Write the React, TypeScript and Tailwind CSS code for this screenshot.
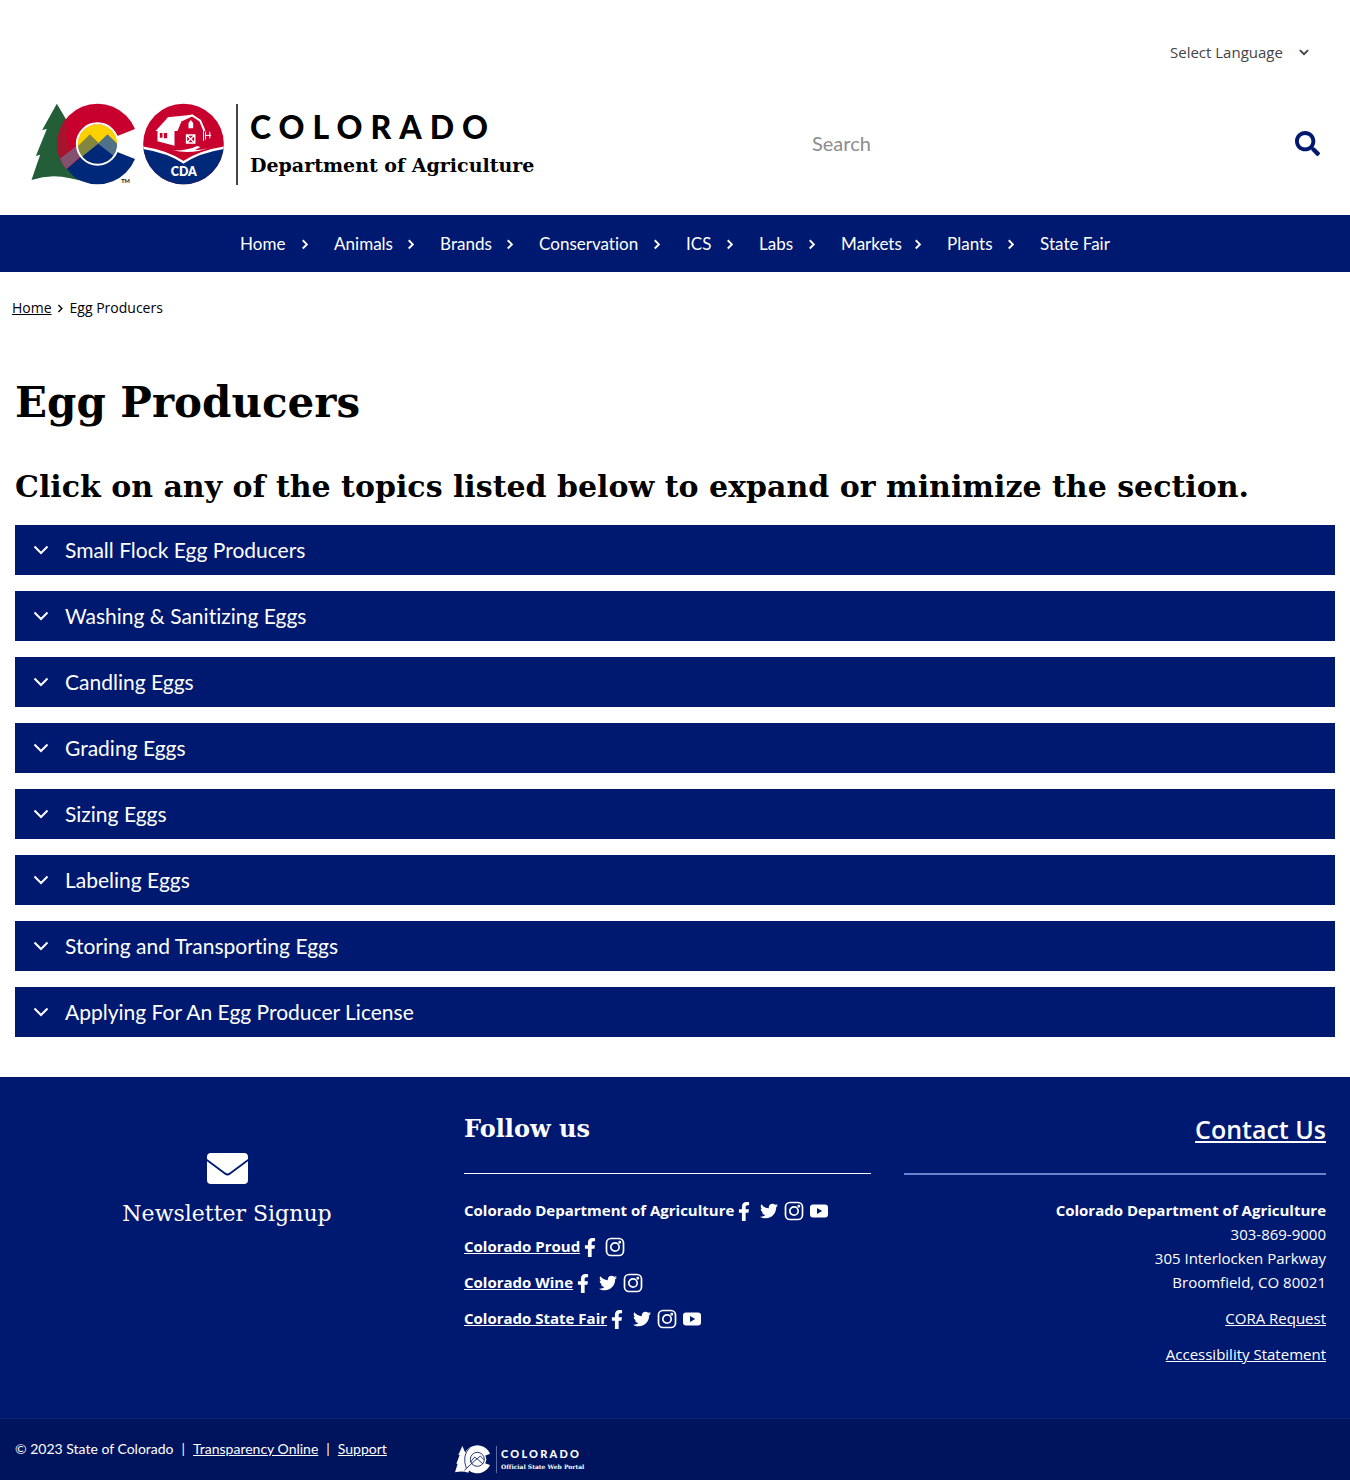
import React from "react";
import { FaFacebookF, FaSearch, FaTwitter } from "react-icons/fa";

const slab = "font-['DejaVu_Serif',serif]";
const museo = "font-['Lato',sans-serif]";

const navItems = [
  { label: "Home", width: "w-[94px]" },
  { label: "Animals", width: "w-[106px]" },
  { label: "Brands", width: "w-[99px]" },
  { label: "Conservation", width: "w-[147px]" },
  { label: "ICS", width: "w-[73px]" },
  { label: "Labs", width: "w-[82px]" },
  { label: "Markets", width: "w-[106px]" },
  { label: "Plants", width: "w-[93px]" },
];

const topics = [
  "Small Flock Egg Producers",
  "Washing & Sanitizing Eggs",
  "Candling Eggs",
  "Grading Eggs",
  "Sizing Eggs",
  "Labeling Eggs",
  "Storing and Transporting Eggs",
  "Applying For An Egg Producer License",
];

type Network = "Facebook" | "Twitter" | "Instagram" | "YouTube";

const social: { name: string; linked: boolean; networks: Network[] }[] = [
  { name: "Colorado Department of Agriculture", linked: false, networks: ["Facebook", "Twitter", "Instagram", "YouTube"] },
  { name: "Colorado Proud", linked: true, networks: ["Facebook", "Instagram"] },
  { name: "Colorado Wine", linked: true, networks: ["Facebook", "Twitter", "Instagram"] },
  { name: "Colorado State Fair", linked: true, networks: ["Facebook", "Twitter", "Instagram", "YouTube"] },
];

function Chevron({ className, d, strokeWidth = 2 }: { className: string; d: string; strokeWidth?: number }) {
  return (
    <svg viewBox="0 0 16 16" className={className} fill="none" stroke="currentColor" strokeWidth={strokeWidth} aria-hidden="true">
      <path d={d} />
    </svg>
  );
}

function StateEmblem() {
  return (
    <svg viewBox="30 40 584 246" className="h-[82px] w-[195px] shrink-0" aria-hidden="true">
      <defs>
        <clipPath id="c-disc"><circle cx="232" cy="163" r="121" /></clipPath>
        <clipPath id="c-core"><circle cx="232" cy="163" r="60" /></clipPath>
        <clipPath id="cda-disc"><circle cx="490" cy="163" r="121" /></clipPath>
      </defs>
      <path
        d="M110 42 L66 121 L80 118 L47 199 L60 195 L34 271 Q92 252 150 266 L190 275 L190 180 L150 110 Z"
        fill="#235e39"
      />
      <g clipPath="url(#c-disc)">
        <path d="M100 30 H360 V163 H232 L140 238 L132 234 L100 208 Z" fill="#c8002e" />
        <path d="M110 42 L134 86 L128 90 L146 128 L136 128 L150 180 L112 215 L100 90 Z" fill="#a8142c" />
        <path d="M108 216 L172 166 L188 194 L140 238 Z" fill="#84506f" />
        <path d="M140 238 L232 160 L360 165 V300 H178 Q165 262 140 238 Z" fill="#002878" />
      </g>
      <path d="M350 116 L284 142 V184 L350 210 L380 163 Z" fill="#fff" />
      <g clipPath="url(#c-core)">
        <rect x="170" y="100" width="124" height="126" fill="#fdd000" />
        <path d="M150 192 L209 134 L250 174 L190 226 L150 226 Z" fill="#84863f" />
        <path d="M234 161 L262 134 L310 180 V226 H234 Z" fill="#4f7289" />
        <path d="M160 222 L234 162 L300 214 V240 H160 Z" fill="#002878" />
      </g>
      <circle cx="232" cy="163" r="62" fill="none" stroke="#fff" strokeWidth="6" />
      <text x="303" y="280" fill="#111" fontSize="17" fontWeight="700" fontFamily="Lato, sans-serif">TM</text>
      <g clipPath="url(#cda-disc)">
        <rect x="365" y="40" width="250" height="246" fill="#c8002e" />
        <path d="M360 173 Q440 184 490 218 Q540 184 620 173 V290 H360 Z" fill="#002878" />
        <path d="M360 173 Q440 184 490 218 Q540 184 620 173" fill="none" stroke="#fff" strokeWidth="7" />
      </g>
      <path d="M406 124 L437 90 L443 83 L516 75 L486 90 L472 124 Z" fill="#fff" />
      <path d="M412 122 L463 119 V168 L412 155 Z" fill="#fff" />
      <path d="M419 130 h8 v14 h-8 Z M431 130 h10 v16 h-10 Z" fill="#c8002e" />
      <path d="M484 92 L516 77 L540 93 L553 124" fill="none" stroke="#fff" strokeWidth="6" />
      <path d="M512 91 L519 100 V116 H505 V100 Z" fill="#fff" />
      <path d="M499 136 H524 V160 H499 Z M499 136 L524 160 M524 136 L499 160" fill="none" stroke="#fff" strokeWidth="4" />
      <path d="M550 122 V154 M554 137 H573 M556 126 V150 M569 126 V146" fill="none" stroke="#fff" strokeWidth="3" />
      <path d="M455 182 Q500 184 531 169 L541 172 L525 181 Q545 182 563 175 Q520 194 455 182 Z" fill="#fff" />
      <text x="491" y="258" textAnchor="middle" fill="#fff" fontSize="37" fontWeight="800" fontFamily="Lato, sans-serif">CDA</text>
    </svg>
  );
}

function PortalEmblem() {
  return (
    <svg viewBox="0 0 108 87" className="h-[29px] w-9 shrink-0" aria-hidden="true">
      <path d="M22 3 L10 30 L14 30 L4 56 L8 56 L0 82 Q22 76 40 83 L48 60 L48 20 L34 30 Z" fill="#fff" />
      <path d="M105 26 A42 42 0 1 0 105 60 L88 54 A22 22 0 1 1 88 33 Z" fill="#fff" />
      <circle cx="70" cy="43" r="24" fill="#fff" />
      <circle cx="67" cy="43" r="21" fill="none" stroke="#001661" strokeWidth="2.5" />
      <path d="M28 76 L66 41 L84 57 M46 52 L59 36 L66 42 L76 33 L88 45" fill="none" stroke="#001661" strokeWidth="2.5" />
      <path d="M44 8 Q20 32 34 70" fill="none" stroke="#001661" strokeWidth="2.5" />
    </svg>
  );
}

function Envelope() {
  return (
    <svg viewBox="0 0 41 31" className="h-[31px] w-[41px]" aria-hidden="true">
      <rect width="41" height="31" rx="4" fill="#fff" />
      <path d="M-1 6.500 L18 20.500 Q20.500 22.500 23 20.500 L42 6.500" fill="none" stroke="#001970" strokeWidth="1.800" />
    </svg>
  );
}

function SocialLink({ network, owner }: { network: Network; owner: string }) {
  return (
    <a href="#" aria-label={`${owner} on ${network}`} className="flex h-5 w-5 items-center justify-center">
      {network === "Facebook" && <FaFacebookF className="h-[19px] w-5" />}
      {network === "Twitter" && <FaTwitter className="h-[18px] w-[18px]" />}
      {network === "Instagram" && (
        <svg viewBox="0 0 20 20" className="h-5 w-5" fill="none" stroke="currentColor" strokeWidth="1.700" aria-hidden="true">
          <rect x="1.500" y="1.500" width="17" height="17" rx="4.500" />
          <circle cx="10" cy="10" r="4.200" />
          <circle cx="14.800" cy="5.200" r="0.600" />
        </svg>
      )}
      {network === "YouTube" && (
        <svg viewBox="0 0 20 20" className="h-5 w-5" aria-hidden="true">
          <path fillRule="evenodd" d="M4 3.500 H16 Q19 3.500 19 6.500 V13.500 Q19 16.500 16 16.500 H4 Q1 16.500 1 13.500 V6.500 Q1 3.500 4 3.500 Z M8 7 V13 L13.200 10 Z" fill="currentColor" />
        </svg>
      )}
    </a>
  );
}

export default function App() {
  return (
    <div className="min-h-screen bg-white font-['Open_Sans',sans-serif] text-[15px] text-black [font-variant-ligatures:none]">
      <header>
        <div className="flex justify-end px-10 pt-9">
          <div className="relative flex h-8 items-center text-[#444]">
            <select aria-label="Select Language" className="h-8 w-[140px] appearance-none bg-transparent outline-none">
              <option>Select Language</option>
            </select>
            <Chevron className="pointer-events-none absolute right-0 h-3 w-3" d="M2.500 5.500 L8 11 L13.500 5.500" strokeWidth={2.5} />
          </div>
        </div>

        <div className="flex items-center justify-between px-[30px] pt-[35px] pb-[30px]">
          <a href="#" className="flex items-center" aria-label="Colorado Department of Agriculture">
            <StateEmblem />
            <span className="ml-[11px] h-[81px] border-l-2 border-[#444]" />
            <span className="ml-3 flex flex-col pt-0.5">
              <span className="font-['Lato',sans-serif] text-[32px] leading-10 font-black tracking-[0.25em]">COLORADO</span>
              <span className={`${slab} text-[19px] leading-9 font-bold`}>Department of Agriculture</span>
            </span>
          </a>
          <form role="search" className="flex w-[508px] items-center pb-0.5" onSubmit={(e) => e.preventDefault()}>
            <input
              type="text"
              aria-label="Search"
              placeholder="Search"
              className={`${museo} h-10 min-w-0 flex-1 text-xl outline-none placeholder:text-[#8c8c8c]`}
            />
            <button type="submit" aria-label="Submit search" className="text-[#001970]">
              <FaSearch className="h-[25px] w-[25px]" />
            </button>
          </form>
        </div>

        <nav className={`${museo} flex h-[57px] items-center justify-center bg-[#001970] text-[17px] text-white`}>
          {navItems.map((item) => (
            <a key={item.label} href="#" className={`${item.width} flex items-center justify-between pr-[23px]`}>
              {item.label}
              <Chevron className="h-3 w-3" d="M5 3 L10.500 8.500 L5 14" strokeWidth={2.5} />
            </a>
          ))}
          <a href="#">State Fair</a>
        </nav>
      </header>

      <nav aria-label="Breadcrumb" className="flex items-center px-3 pt-6 text-sm leading-6">
        <a href="#" className="underline">Home</a>
        <Chevron className="mr-1 ml-[3px] h-[11px] w-[11px]" d="M5 3 L10 8 L5 13" strokeWidth={2} />
        <span>Egg Producers</span>
      </nav>

      <main className="px-[15px] pb-10">
        <h1 className={`${slab} pt-[55px] text-[42px] leading-[56px] font-bold`}>Egg Producers</h1>
        <h2 className={`${slab} pt-7 text-[30px] leading-[56px] font-bold`}>
          Click on any of the topics listed below to expand or minimize the section.
        </h2>
        <div className="flex flex-col gap-4 pt-[10px]">
          {topics.map((topic) => (
            <button
              key={topic}
              type="button"
              aria-expanded="false"
              className={`${museo} flex h-[50px] items-center bg-[#001970] px-[18px] text-left text-[21px] text-white`}
            >
              <Chevron className="mr-4 h-4 w-4" d="M1.500 4.500 L8 11 L14.500 4.500" />
              {topic}
            </button>
          ))}
        </div>
      </main>

      <footer className="bg-[#001970] text-white">
        <div className="grid grid-cols-3 px-[15px] pb-[52px]">
          <a href="#" className="mr-4 flex flex-col items-center pt-[76px]">
            <Envelope />
            <span className={`${slab} pt-3 text-[22px] leading-9`}>Newsletter Signup</span>
          </a>

          <section className="ml-[9px] pt-8">
            <h2 className={`${slab} text-2xl leading-10 font-bold`}>Follow us</h2>
            <hr className="mt-6 mr-6 border-white" />
            <ul className="flex flex-col gap-3 pt-6">
              {social.map((row) => (
                <li key={row.name} className="flex h-6 items-center font-bold">
                  {row.linked ? (
                    <a href="#" className="underline">{row.name}</a>
                  ) : (
                    <span>{row.name}</span>
                  )}
                  <span className="flex gap-[5px] pt-0.5">
                    {row.networks.map((n) => (
                      <SocialLink key={n} network={n} owner={row.name} />
                    ))}
                  </span>
                </li>
              ))}
            </ul>
          </section>

          <section className="mx-[9px] pt-8 text-right">
            <h2 className="text-[25px] leading-10 font-semibold">
              <a href="#" className="underline">Contact Us</a>
            </h2>
            <hr className="mt-6 border-t-2 border-[#6b82cf]" />
            <address className="pt-[23px] leading-6 not-italic">
              <strong className="font-bold">Colorado Department of Agriculture</strong>
              <br />
              303-869-9000
              <br />
              305 Interlocken Parkway
              <br />
              Broomfield, CO 80021
            </address>
            <p className="pt-3 leading-6"><a href="#" className="underline">CORA Request</a></p>
            <p className="pt-3 leading-6"><a href="#" className="underline">Accessibility Statement</a></p>
          </section>
        </div>

        <div className="grid grid-cols-3 border-t border-[#0b2376] bg-[#00145e] px-[15px] pt-[18px] pb-[6px]">
          <p className="flex gap-2 font-['Lato',sans-serif] text-sm leading-6">
            <span>© 2023 State of Colorado</span>
            <span>|</span>
            <a href="#" className="underline">Transparency Online</a>
            <span>|</span>
            <a href="#" className="underline">Support</a>
          </p>
          <a href="#" className="flex items-center pt-2" aria-label="Colorado Official State Web Portal">
            <PortalEmblem />
            <span className="ml-[5px] h-[27px] border-l border-[#5a6ba6]" />
            <span className="ml-1 flex flex-col">
              <span className="font-['Lato',sans-serif] text-[11px] leading-[14px] font-black tracking-[0.2em]">COLORADO</span>
              <span className={`${slab} text-[6px] leading-3 font-bold`}>Official State Web Portal</span>
            </span>
          </a>
        </div>
      </footer>
    </div>
  );
}
